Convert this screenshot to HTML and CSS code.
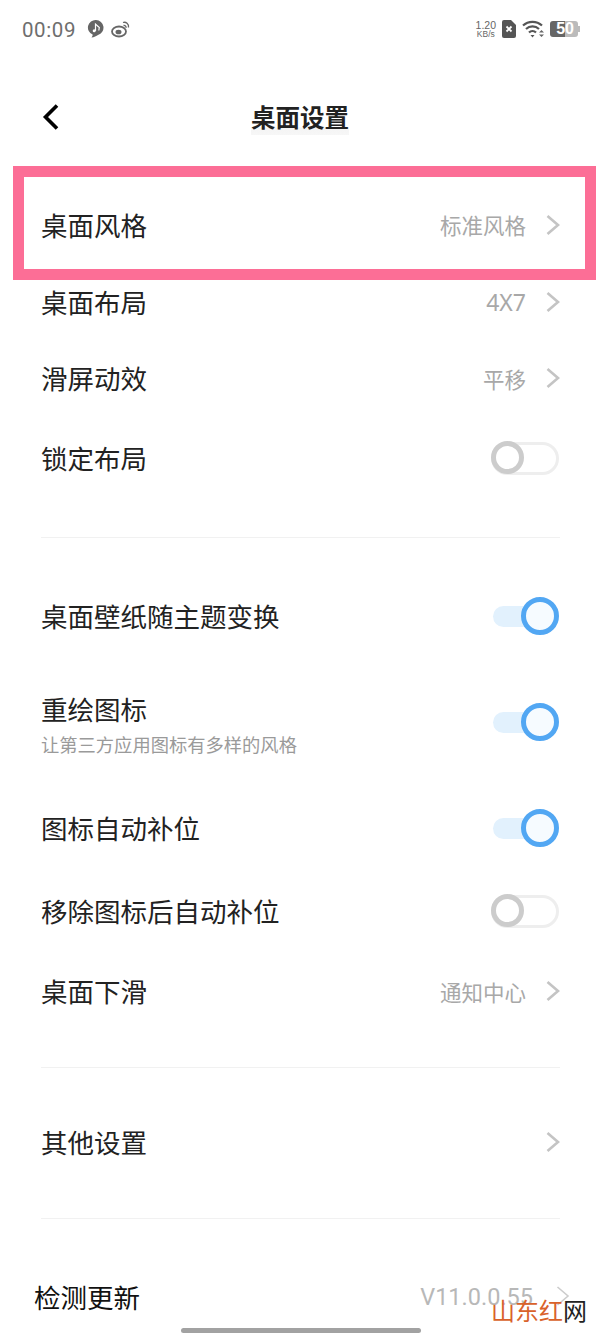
FILE: index.html
```html
<!DOCTYPE html>
<html lang="zh-CN">
<head>
<meta charset="utf-8">
<title>桌面设置</title>
<link rel="stylesheet" href="styles.css">
</head>
<body>
<div class="page">
  <div class="status">
    <span class="time">00:09</span>
    <svg class="ic-music" width="18" height="19" viewBox="0 0 18 19"><path d="M9 1a7.600 7.600 0 0 1 2 14.900C9.500 17 7 18 4.500 18.500 5.500 17 5.800 16 5.600 15.600A7.600 7.600 0 0 1 9 1z" fill="#666"/><path d="M8.500 12V5l3.800 3.500-.5 3" fill="none" stroke="#fff" stroke-width="1.200"/><circle cx="7.200" cy="11.800" r="1.500" fill="#fff"/></svg>
    <svg class="ic-weibo" width="20" height="18" viewBox="0 0 20 18"><ellipse cx="8" cy="11.500" rx="7" ry="5" fill="none" stroke="#666" stroke-width="1.800"/><ellipse cx="7.500" cy="12" rx="3" ry="2.300" fill="#666"/><path d="M12 2.500c3-1 6 1.500 5.500 5M12.500 5.500c1.500-.4 2.800.8 2.500 2.300" fill="none" stroke="#666" stroke-width="1.300"/></svg>
    <span class="status-space"></span>
    <span class="speed"><span>1.20</span><span class="speed-unit">KB/s</span></span>
    <svg class="ic-sim" width="14" height="18" viewBox="0 0 14 18"><path d="M2 0h7l5 5v11a2 2 0 0 1-2 2H2a2 2 0 0 1-2-2V2a2 2 0 0 1 2-2z" fill="#555"/><path d="M4.500 6.500l5 5M9.500 6.500l-5 5" stroke="#fff" stroke-width="1.800"/></svg>
    <svg class="ic-wifi" width="23" height="18" viewBox="0 0 23 18"><path d="M1 5.500a14 14 0 0 1 19 0M4 9a9.500 9.500 0 0 1 13 0M7 12.500a5 5 0 0 1 7 0" fill="none" stroke="#555" stroke-width="2.200"/><path d="M8.500 15h4l-2 2.500z" fill="#555"/><path d="M17 12.500l2.500-2.500 2.500 2.500zM17 14.500l2.500 2.500 2.500-2.500z" fill="#666"/></svg>
    <span class="battery"><span class="battery-body">50</span><span class="battery-tip"></span></span>
  </div>

  <header class="nav">
    <svg class="back" width="20" height="28" viewBox="0 0 20 28"><path d="M16 2.500L4.500 14 16 25.500" fill="none" stroke="#000" stroke-width="3.600"/></svg>
    <h1 class="title">桌面设置</h1>
  </header>

  <div class="row row-77"><span class="label">桌面风格</span><span class="value">标准风格</span><svg class="chev" width="16" height="22" viewBox="0 0 16 22"><path d="M2.500 2L13 11 2.500 20" fill="none" stroke="#c4c4c4" stroke-width="2.600"/></svg></div>
  <div class="row row-77"><span class="label">桌面布局</span><span class="value latin">4X7</span><svg class="chev" width="16" height="22" viewBox="0 0 16 22"><path d="M2.500 2L13 11 2.500 20" fill="none" stroke="#c4c4c4" stroke-width="2.600"/></svg></div>
  <div class="row row-76"><span class="label">滑屏动效</span><span class="value">平移</span><svg class="chev" width="16" height="22" viewBox="0 0 16 22"><path d="M2.500 2L13 11 2.500 20" fill="none" stroke="#c4c4c4" stroke-width="2.600"/></svg></div>
  <div class="row row-84"><span class="label">锁定布局</span><span class="toggle off"></span></div>
  <div class="divider div-1"></div>

  <div class="row row-80"><span class="label">桌面壁纸随主题变换</span><span class="toggle on"></span></div>
  <div class="row row-128">
    <div class="stack"><span class="label">重绘图标</span><span class="sub">让第三方应用图标有多样的风格</span></div>
    <span class="toggle on toggle-low"></span>
  </div>
  <div class="row row-88"><span class="label">图标自动补位</span><span class="toggle on"></span></div>
  <div class="row row-78"><span class="label">移除图标后自动补位</span><span class="toggle off"></span></div>
  <div class="row row-82"><span class="label">桌面下滑</span><span class="value">通知中心</span><svg class="chev" width="16" height="22" viewBox="0 0 16 22"><path d="M2.500 2L13 11 2.500 20" fill="none" stroke="#c4c4c4" stroke-width="2.600"/></svg></div>
  <div class="divider div-2"></div>

  <div class="row row-76"><span class="label">其他设置</span><svg class="chev" width="16" height="22" viewBox="0 0 16 22"><path d="M2.500 2L13 11 2.500 20" fill="none" stroke="#c4c4c4" stroke-width="2.600"/></svg></div>
  <div class="divider div-3"></div>

  <div class="row row-update"><span class="label label-dark">检测更新</span><span class="value version">V11.0.0.55</span><svg class="chev chev-thin" width="16" height="22" viewBox="0 0 16 22"><path d="M2.500 2L13 11 2.500 20" fill="none" stroke="#ccc" stroke-width="1.600"/></svg></div>

  <div class="highlight"></div>
  <div class="watermark"><span class="wm-orange">山东红</span>网</div>
  <div class="home-bar"></div>
</div>
</body>
</html>
```
FILE: styles.css
```css
*, *::before, *::after { box-sizing: border-box; }
html, body { margin: 0; padding: 0; background: #fff; }
body { font-family: "Noto Sans CJK SC", "Noto Sans", sans-serif; }
.page { position: relative; width: 600px; height: 1333px; overflow: hidden; background: #fff; }

.status { display: flex; align-items: center; height: 58px; padding: 0 20px 0 22px; color: #666; }
.time { font-family: Roboto, sans-serif; font-size: 20.500px; letter-spacing: .6px; color: #6e6e6e; margin-right: 11px; margin-top: 2px; }
.ic-music { margin-right: 6px; margin-top: -1px; }
.ic-weibo { margin-top: 0; }
.status-space { flex: 1; }
.speed { display: flex; flex-direction: column; align-items: center; font-family: "Liberation Sans", sans-serif; font-size: 10.500px; line-height: 10px; color: #666; margin-right: 6px; }
.speed-unit { font-size: 8.500px; line-height: 9px; }
.ic-sim { margin-right: 6px; }
.ic-wifi { margin-right: 5px; }
.battery { display: flex; align-items: center; }
.battery-body { width: 28px; height: 16px; background: linear-gradient(90deg, #666 0 55%, #bbb 55% 100%); border-radius: 3px; color: #fff; font: 700 16px/16px "Liberation Sans", sans-serif; text-align: right; padding-right: 4px; }
.battery-tip { width: 2px; height: 6px; background: #bbb; }

.nav { position: relative; display: flex; justify-content: center; align-items: center; height: 128px; padding-bottom: 10px; }
.back { position: absolute; left: 41px; top: 45px; }
.title { margin: 0; font-size: 24.500px; font-weight: 700; line-height: 36px; color: #222; background: linear-gradient(#fff 78%, #f4f4f4 80%, #f7f7f7 100%); }

.row { display: flex; align-items: center; padding: 0 39px 0 41px; }
.row-76 { height: 76px; }
.row-77 { height: 77px; }
.row-84 { height: 84px; }
.row-80 { height: 80px; margin-top: 38px; }
.row-128 { height: 128px; }
.row-88 { height: 88px; }
.row-78 { height: 78px; }
.row-82 { height: 82px; }
.label { font-size: 26.500px; line-height: 36px; color: #222; }
.stack { display: flex; flex-direction: column; padding-top: 7px; }
.sub { font-size: 18.300px; line-height: 26px; color: #9a9a9a; margin-top: 4px; }
.value { margin-left: auto; font-size: 21.500px; color: #a8a8a8; margin-right: 19px; }
.latin { font-family: "Noto Sans", sans-serif; font-size: 23px; }
.chev { flex: none; }
.label + .chev { margin-left: auto; }
.toggle { position: relative; margin-left: auto; margin-right: 2px; flex: none; }
.toggle.off { width: 68px; height: 33px; border: 3.500px solid #eeeeee; border-radius: 17px; }
.toggle.off::before { content: ""; position: absolute; left: -3.500px; top: -3.500px; width: 33px; height: 33px; border: 5px solid #cccccc; border-radius: 50%; background: #fff; }
.toggle.on { width: 66px; height: 38px; }
.toggle-low { margin-top: 3px; }
.toggle.on::before { content: ""; position: absolute; left: 0; top: 9px; width: 50px; height: 21px; background: #e2f1fd; border-radius: 11px; }
.toggle.on::after { content: ""; position: absolute; right: 0; top: 0; width: 38px; height: 38px; border: 5px solid #52a7f3; border-radius: 50%; background: #f6fbff; }

.divider { height: 1px; margin: 0 40px 0 41px; background: #f1f1f1; }
.div-1 { margin-top: 37px; }
.div-2 { margin-top: 35px; margin-bottom: 36px; }
.div-3 { margin-top: 38px; }

.row-update { height: 76px; margin-top: 40px; padding: 0 29px 0 34px; }
.label-dark { color: #111; }
.version { font-family: Roboto, sans-serif; font-size: 23.500px; color: #b8b8b8; margin-right: 22px; }
.chev-thin { margin-top: -2px; }

.highlight { position: absolute; left: 13px; top: 166px; width: 583px; height: 114px; border: 11px solid #fc6e96; }
.watermark { position: absolute; left: 491px; top: 1295px; font-size: 24px; line-height: 30px; color: #222; }
.wm-orange { color: #d9622b; }
.home-bar { position: absolute; left: 181px; top: 1328px; width: 240px; height: 5px; background: #a2a2a2; border-radius: 3px; }
```
